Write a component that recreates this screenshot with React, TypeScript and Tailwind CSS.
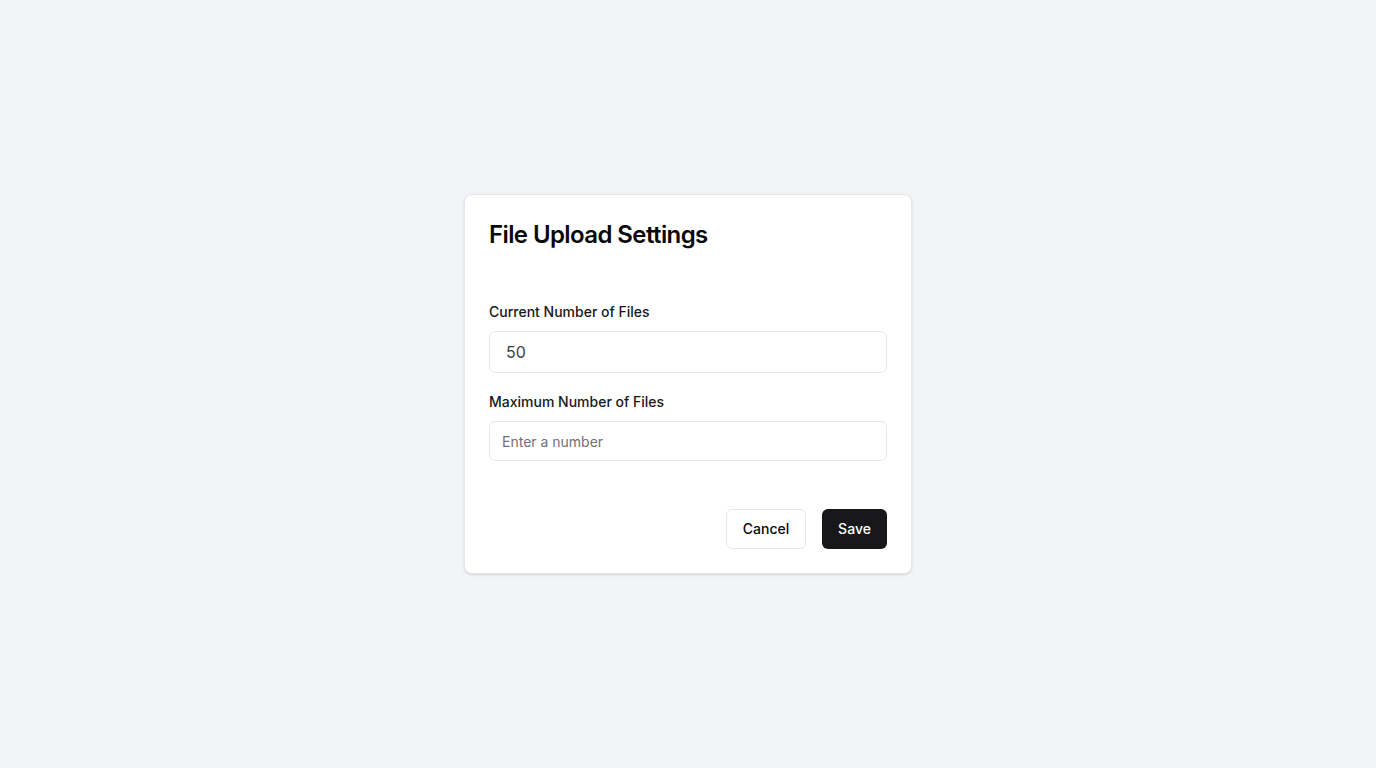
import React from "react";

export default function App() {
  return (
    <div
      className="min-h-screen w-full bg-[#f3f4f6] flex items-center justify-center"
      style={{ fontFamily: "Inter, 'Noto Sans', sans-serif" }}
    >
      <div className="w-[448px] bg-white border border-[#e5e7eb] rounded-lg shadow-sm p-6">
        <h1 className="text-2xl leading-8 font-semibold tracking-tight text-[#09090b] mb-[51px]">
          File Upload Settings
        </h1>
        <label className="block text-sm leading-5 font-medium text-[#18181b] mb-[9px]">
          Current Number of Files
        </label>
        <input
          type="text"
          defaultValue="50"
          className="block w-full h-[42px] rounded-md border border-[#e5e7eb] px-4 text-base text-[#374151] outline-none bg-white"
        />
        <label className="block text-sm leading-5 font-medium text-[#18181b] mt-[19px] mb-[9px]">
          Maximum Number of Files
        </label>
        <input
          type="text"
          placeholder="Enter a number"
          className="block w-full h-10 rounded-md border border-[#e5e7eb] px-3 text-sm text-[#18181b] placeholder:text-[#71717a] outline-none bg-white"
        />
        <div className="flex justify-end gap-4 mt-12">
          <button className="h-10 w-[80px] rounded-md border border-[#e5e7eb] bg-white text-sm font-medium text-[#09090b]">
            Cancel
          </button>
          <button className="h-10 w-[65px] rounded-md bg-[#18181b] text-sm font-medium text-white">
            Save
          </button>
        </div>
      </div>
    </div>
  );
}
